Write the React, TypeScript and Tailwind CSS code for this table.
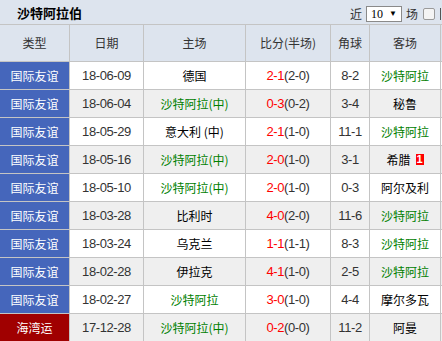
import React from "react";

type Row = {
  type: string;
  red?: boolean;
  date: string;
  home: string;
  homeGreen?: boolean;
  score: string;
  half: string;
  corner: string;
  away: string;
  awayGreen?: boolean;
  badge?: string;
};

const rows: Row[] = [
  { type: "国际友谊", date: "18-06-09", home: "德国", score: "2-1", half: "(2-0)", corner: "8-2", away: "沙特阿拉", awayGreen: true },
  { type: "国际友谊", date: "18-06-04", home: "沙特阿拉(中)", homeGreen: true, score: "0-3", half: "(0-2)", corner: "3-4", away: "秘鲁" },
  { type: "国际友谊", date: "18-05-29", home: "意大利 (中)", score: "2-1", half: "(1-0)", corner: "11-1", away: "沙特阿拉", awayGreen: true },
  { type: "国际友谊", date: "18-05-16", home: "沙特阿拉(中)", homeGreen: true, score: "2-0", half: "(1-0)", corner: "3-1", away: "希腊", badge: "1" },
  { type: "国际友谊", date: "18-05-10", home: "沙特阿拉(中)", homeGreen: true, score: "2-0", half: "(1-0)", corner: "0-3", away: "阿尔及利" },
  { type: "国际友谊", date: "18-03-28", home: "比利时", score: "4-0", half: "(2-0)", corner: "11-6", away: "沙特阿拉", awayGreen: true },
  { type: "国际友谊", date: "18-03-24", home: "乌克兰", score: "1-1", half: "(1-1)", corner: "8-3", away: "沙特阿拉", awayGreen: true },
  { type: "国际友谊", date: "18-02-28", home: "伊拉克", score: "4-1", half: "(1-0)", corner: "2-5", away: "沙特阿拉", awayGreen: true },
  { type: "国际友谊", date: "18-02-27", home: "沙特阿拉", homeGreen: true, score: "3-0", half: "(1-0)", corner: "4-4", away: "摩尔多瓦" },
  { type: "海湾运", red: true, date: "17-12-28", home: "沙特阿拉(中)", homeGreen: true, score: "0-2", half: "(0-0)", corner: "11-2", away: "阿曼" },
];

const cjk = { fontFamily: '"Noto Sans CJK SC", "Noto Sans", sans-serif' };
const num = { fontFamily: '"Liberation Sans", Arial, sans-serif', letterSpacing: "-0.4px" };

const cell = "border-r border-b border-[#c4c4c4] flex items-center justify-center h-[28px] overflow-hidden whitespace-nowrap";
const cols = "grid grid-cols-[70px_74px_102px_85px_39px_71px_80px]";

export default function App() {
  return (
    <div className="w-[442px] h-[341px] overflow-hidden bg-[#dde4ee] relative" style={cjk}>
      <div className="h-[24px] flex items-center relative">
        <div className="pl-[17px] text-[13px] font-bold text-black leading-none">沙特阿拉伯</div>
        <div className="absolute left-[350px] top-[6px] flex items-center text-[12px] text-[#333] leading-none">
          <span className="mr-[4px]">近</span>
          <div className="w-[36px] h-[16px] bg-white border border-[#8a8a8a] flex items-center pl-[4px] text-[12px] text-black" style={{ fontFamily: '"Liberation Serif", serif' }}>
            10
            <span className="ml-[6px] text-[8px]">▼</span>
          </div>
          <span className="ml-[4px]">场</span>
          <div className="ml-[5px] w-[12px] h-[12px] rounded-[2px] border border-[#9a9a9a] bg-[#f4f4f4]" />
          <div className="ml-[5px] w-[1px] h-[12px] bg-[#555]" />
        </div>
      </div>
      <div className="border-t border-[#c4c4c4] w-[521px]">
        <div className={cols + " text-[12px] text-[#333]"}>
          {["类型", "日期", "主场", "比分(半场)", "角球", "客场", ""].map((h, i) => (
            <div key={i} className={cell + " h-[37px]"}>{h}</div>
          ))}
        </div>
        {rows.map((r, i) => {
          const bg = i % 2 === 0 ? "bg-white" : "bg-[#efefef]";
          return (
            <div key={i} className={cols + " text-[12px] " + bg}>
              <div className={cell + " text-white " + (r.red ? "bg-[#a00000]" : "bg-[#4566bb]")}>{r.type}</div>
              <div className={cell + " text-[13px] text-[#333]"} style={num}>{r.date}</div>
              <div className={cell + (r.homeGreen ? " text-[#008000]" : " text-black")}>{r.home}</div>
              <div className={cell + " text-[13px]"} style={num}>
                <span className="text-[#ff0000]">{r.score}</span>
                <span className="text-[#333]">{r.half}</span>
              </div>
              <div className={cell + " text-[13px] text-[#333]"} style={num}>{r.corner}</div>
              <div className={cell + (r.awayGreen ? " text-[#008000]" : " text-black")}>
                {r.away}
                {r.badge && (
                  <span className="ml-[5px] bg-[#ff0000] text-white text-[11px] font-bold leading-[11px] w-[8px] h-[11px] flex items-center justify-center" style={{ fontFamily: '"Liberation Sans", sans-serif' }}>
                    {r.badge}
                  </span>
                )}
              </div>
              <div className={cell} />
            </div>
          );
        })}
      </div>
    </div>
  );
}
